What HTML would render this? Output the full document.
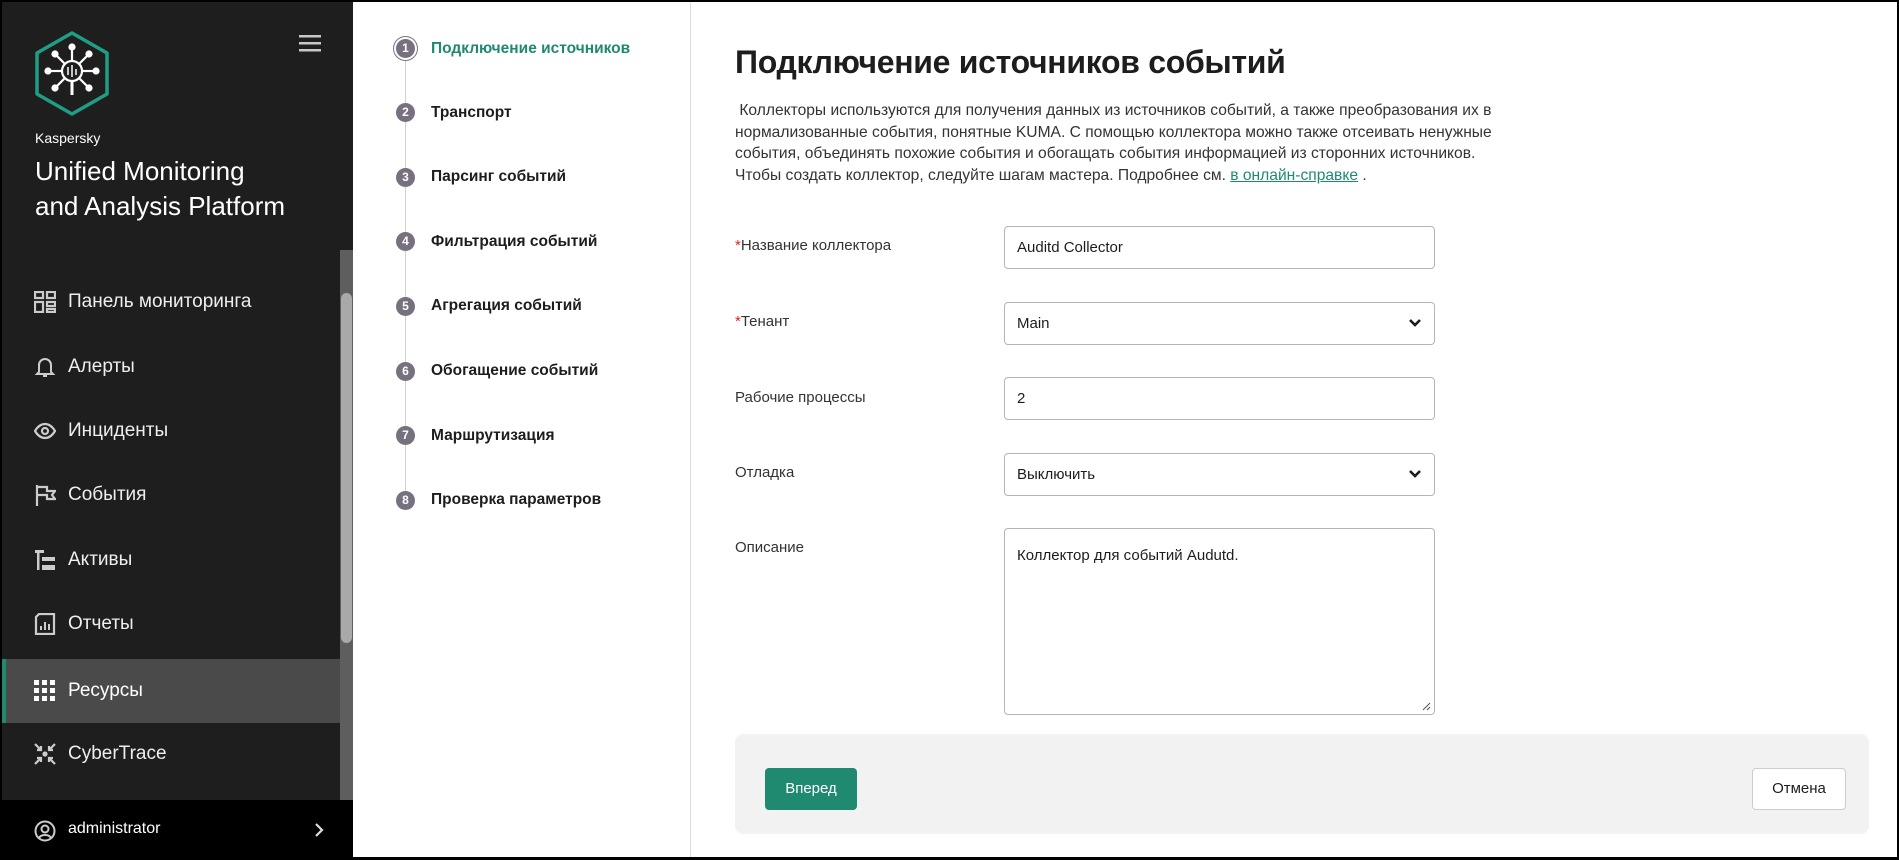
<!DOCTYPE html>
<html><head><meta charset="utf-8">
<style>
*{box-sizing:border-box;margin:0;padding:0}
html,body{width:1899px;height:860px;overflow:hidden;background:#000;font-family:"Liberation Sans",sans-serif}
#frame{position:absolute;left:2px;top:2px;width:1895px;height:855px;background:#fff;overflow:hidden}
#side{position:absolute;left:0;top:0;width:351px;height:855px;background:#1e1e1e;color:#fff}
.scroll{position:absolute;left:338px;top:248px;width:13px;height:550px;background:#5e5e5e}
.thumb{position:absolute;left:339px;top:291px;width:11px;height:350px;background:#a9a9a9;border-radius:6px}
.menu{position:absolute;left:0;width:338px;height:64px;display:flex;align-items:center;font-size:19px;color:#eee}
.menu svg{position:absolute;left:32px}
.menu span{position:absolute;left:66px}
.menu.act{background:#4a4a4a}
.menu.act:before{content:"";position:absolute;left:0;top:0;width:4px;height:64px;background:#1f8a70}
#user{position:absolute;left:0;top:798px;width:351px;height:57px;background:#000;color:#fff;font-size:16px}
#steps{position:absolute;left:351px;top:0;width:338px;height:855px;border-right:1px solid #ddd}
.st{position:absolute;left:78px;font-size:15.5px;font-weight:bold;color:#1d1d1b;white-space:nowrap}
.dot{position:absolute;left:43px;width:19px;height:19px;border-radius:50%;background:#77717f;color:#fff;font-size:12px;font-weight:bold;text-align:center;line-height:19px}
#main{position:absolute;left:733px;top:0}
h1{position:absolute;left:0;top:42px;font-size:32px;font-weight:bold;color:#1d1d1b;white-space:nowrap;letter-spacing:-.3px}
.p{position:absolute;left:0;top:98px;width:900px;font-size:15.6px;line-height:21.7px;color:#333;white-space:nowrap}
.p a{color:#1f8a70;text-decoration:underline}
.lb{position:absolute;left:0;font-size:15px;color:#333;white-space:nowrap}
.lb i{color:#d22;font-style:normal}
.in{position:absolute;left:269px;width:431px;height:43px;border:1px solid #b5b5b5;border-radius:4px;font-size:15px;color:#1d1d1b;padding:12px 12px}
.chev{position:absolute;right:12px;top:14px}
#foot{position:absolute;left:0;top:732px;width:1134px;height:100px;background:#f2f2f2;border-radius:8px}
.b1{position:absolute;left:30px;top:34px;width:92px;height:42px;background:#1f8a70;border-radius:4px;color:#fff;font-size:15px;text-align:center;line-height:42px}
.b2{position:absolute;left:1017px;top:34px;width:94px;height:42px;background:#fff;border:1px solid #ccc;border-radius:4px;color:#1d1d1b;font-size:15px;text-align:center;line-height:40px}
</style></head><body>
<div id="frame">
<div id="side">
 <svg style="position:absolute;left:32px;top:29px" width="76" height="86" viewBox="0 0 76 86">
  <polygon points="38,2 73,22 73,63 38,83 3,63 3,22" fill="none" stroke="#1f9e86" stroke-width="3.5" stroke-linejoin="round"/>
  <g stroke="#fff" stroke-width="2.2" fill="#fff">
   <circle cx="38" cy="40" r="10" fill="none"/>
   <line x1="38" y1="50" x2="38" y2="64" stroke-width="3"/>
   <line x1="38" y1="30" x2="38" y2="18"/><circle cx="38" cy="16" r="2.5"/>
   <line x1="28" y1="40" x2="16" y2="40"/><circle cx="14" cy="40" r="2.5"/>
   <line x1="48" y1="40" x2="60" y2="40"/><circle cx="62" cy="40" r="2.5"/>
   <line x1="31" y1="33" x2="23" y2="25"/><circle cx="21" cy="23" r="2.5"/>
   <line x1="45" y1="33" x2="53" y2="25"/><circle cx="55" cy="23" r="2.5"/>
   <line x1="31" y1="47" x2="23" y2="55"/><circle cx="21" cy="57" r="2.5"/>
   <line x1="45" y1="47" x2="53" y2="55"/><circle cx="55" cy="57" r="2.5"/>
   <line x1="34" y1="36" x2="34" y2="44" stroke-width="1.5"/><line x1="38" y1="34" x2="38" y2="46" stroke-width="1.5"/><line x1="42" y1="38" x2="42" y2="44" stroke-width="1.5"/>
  </g>
 </svg>
 <svg style="position:absolute;left:297px;top:32px" width="22" height="18"><g fill="#c8c8c8"><rect y="1" width="22" height="2.5"/><rect y="8" width="22" height="2.5"/><rect y="15" width="22" height="2.5"/></g></svg>
 <div style="position:absolute;left:33px;top:128px;font-size:14px">Kaspersky</div>
 <div style="position:absolute;left:33px;top:152px;font-size:26px;line-height:35px">Unified Monitoring<br>and Analysis Platform</div>
 <div class="scroll"></div><div class="thumb"></div>
 <div class="menu" style="top:268px"><svg width="22" height="22" viewBox="0 0 22 22" fill="none" stroke="#ccc" stroke-width="2.2"><rect x="1" y="1" width="8" height="6"/><rect x="13" y="1" width="8" height="6"/><rect x="1" y="11" width="8" height="10"/><rect x="13" y="11" width="8" height="4"/><rect x="13" y="18" width="8" height="3"/></svg><span>Панель мониторинга</span></div>
 <div class="menu" style="top:333px"><svg width="22" height="22" viewBox="0 0 22 22" fill="none" stroke="#ccc" stroke-width="2"><path d="M5 16V9a6 6 0 0 1 12 0v7l2 2H3z"/><path d="M9 20h4"/></svg><span>Алерты</span></div>
 <div class="menu" style="top:397px"><svg width="22" height="22" viewBox="0 0 22 22" fill="none" stroke="#ccc" stroke-width="2.2"><path d="M1 11c3-5 6-7 10-7s7 2 10 7c-3 5-6 7-10 7S4 16 1 11z"/><circle cx="11" cy="11" r="3"/></svg><span>Инциденты</span></div>
 <div class="menu" style="top:461px"><svg width="22" height="22" viewBox="0 0 22 22" fill="none" stroke="#ccc" stroke-width="2.2"><path d="M3 1v21M3 3h10v4h8l-3 4 3 4h-8v-4H3"/></svg><span>События</span></div>
 <div class="menu" style="top:526px"><svg width="22" height="22" viewBox="0 0 22 22" fill="#ccc"><rect x="1" y="1" width="9" height="3"/><rect x="3" y="4" width="2.5" height="17"/><rect x="8" y="8" width="13" height="4"/><rect x="8" y="16" width="13" height="5"/></svg><span>Активы</span></div>
 <div class="menu" style="top:590px"><svg width="22" height="22" viewBox="0 0 22 22" fill="none" stroke="#ccc" stroke-width="2.2"><path d="M2 21V4l3-3h15v20z"/><path d="M7 17v-4M11 17V9M15 17v-6" stroke-width="2"/></svg><span>Отчеты</span></div>
 <div class="menu act" style="top:657px"><svg width="22" height="22" viewBox="0 0 22 22" fill="#fff"><rect x="0" y="0" width="5" height="5"/><rect x="8" y="0" width="5" height="5"/><rect x="16" y="0" width="5" height="5"/><rect x="0" y="8" width="5" height="5"/><rect x="8" y="8" width="5" height="5"/><rect x="16" y="8" width="5" height="5"/><rect x="0" y="16" width="5" height="5"/><rect x="8" y="16" width="5" height="5"/><rect x="16" y="16" width="5" height="5"/></svg><span style="color:#fff">Ресурсы</span></div>
 <div class="menu" style="top:720px"><svg width="22" height="22" viewBox="0 0 22 22" fill="none" stroke="#ccc" stroke-width="2.2"><path d="M1 1l6 6M7 3v4H3M21 1l-6 6M15 3v4h4M1 21l6-6M3 15h4v4M21 21l-6-6M19 15h-4v4"/><circle cx="11" cy="11" r="1.5" fill="#ccc"/></svg><span>CyberTrace</span></div>
 <div id="user">
  <svg style="position:absolute;left:32px;top:20px" width="22" height="22" viewBox="0 0 22 22" fill="none" stroke="#ccc" stroke-width="2"><circle cx="11" cy="11" r="9.5"/><circle cx="11" cy="9" r="3.5"/><path d="M5 18c2-4 10-4 12 0"/></svg>
  <span style="position:absolute;left:66px;top:20px">administrator</span>
  <svg style="position:absolute;left:312px;top:22px" width="10" height="16" viewBox="0 0 10 16" fill="none" stroke="#ddd" stroke-width="2.2"><path d="M2 2l6 6-6 6"/></svg>
 </div>
</div>
<div id="steps">
 <div style="position:absolute;left:52px;top:48px;width:1px;height:450px;background:#d0d0d0"></div>
 <div style="position:absolute;left:40px;top:34px;width:25px;height:25px;border-radius:50%;border:1.5px solid #77717f;background:#fff"></div>
 <div class="dot" style="top:37px">1</div><div class="st" style="top:38px;color:#1f8a70">Подключение источников</div>
 <div class="dot" style="top:101px">2</div><div class="st" style="top:102px">Транспорт</div>
 <div class="dot" style="top:166px">3</div><div class="st" style="top:166px">Парсинг событий</div>
 <div class="dot" style="top:230px">4</div><div class="st" style="top:231px">Фильтрация событий</div>
 <div class="dot" style="top:295px">5</div><div class="st" style="top:295px">Агрегация событий</div>
 <div class="dot" style="top:360px">6</div><div class="st" style="top:360px">Обогащение событий</div>
 <div class="dot" style="top:424px">7</div><div class="st" style="top:425px">Маршрутизация</div>
 <div class="dot" style="top:489px">8</div><div class="st" style="top:489px">Проверка параметров</div>
</div>
<div id="main">
 <h1>Подключение источников событий</h1>
 <div class="p">&nbsp;Коллекторы используются для получения данных из источников событий, а также преобразования их в<br>нормализованные события, понятные KUMA. С помощью коллектора можно также отсеивать ненужные<br>события, объединять похожие события и обогащать события информацией из сторонних источников.<br>Чтобы создать коллектор, следуйте шагам мастера. Подробнее см. <a>в онлайн-справке</a> .</div>
 <div class="lb" style="top:235px"><i>*</i>Название коллектора</div>
 <div class="in" style="top:224px">Auditd Collector</div>
 <div class="lb" style="top:311px"><i>*</i>Тенант</div>
 <div class="in" style="top:300px">Main<svg class="chev" width="14" height="12" viewBox="0 0 14 12" fill="none" stroke="#1d1d1b" stroke-width="2.6"><path d="M2 3l5 5 5-5"/></svg></div>
 <div class="lb" style="top:387px">Рабочие процессы</div>
 <div class="in" style="top:375px">2</div>
 <div class="lb" style="top:462px">Отладка</div>
 <div class="in" style="top:451px">Выключить<svg class="chev" width="14" height="12" viewBox="0 0 14 12" fill="none" stroke="#1d1d1b" stroke-width="2.6"><path d="M2 3l5 5 5-5"/></svg></div>
 <div class="lb" style="top:537px">Описание</div>
 <div class="in" style="top:526px;height:187px;padding-top:18px">Коллектор для событий Audutd.<svg style="position:absolute;right:3px;bottom:3px" width="10" height="10" stroke="#555" stroke-width="1"><path d="M9 2L2 9M9 6L6 9"/></svg></div>
 <div id="foot"><div class="b1">Вперед</div><div class="b2">Отмена</div></div>
</div>
</div>
</body></html>
